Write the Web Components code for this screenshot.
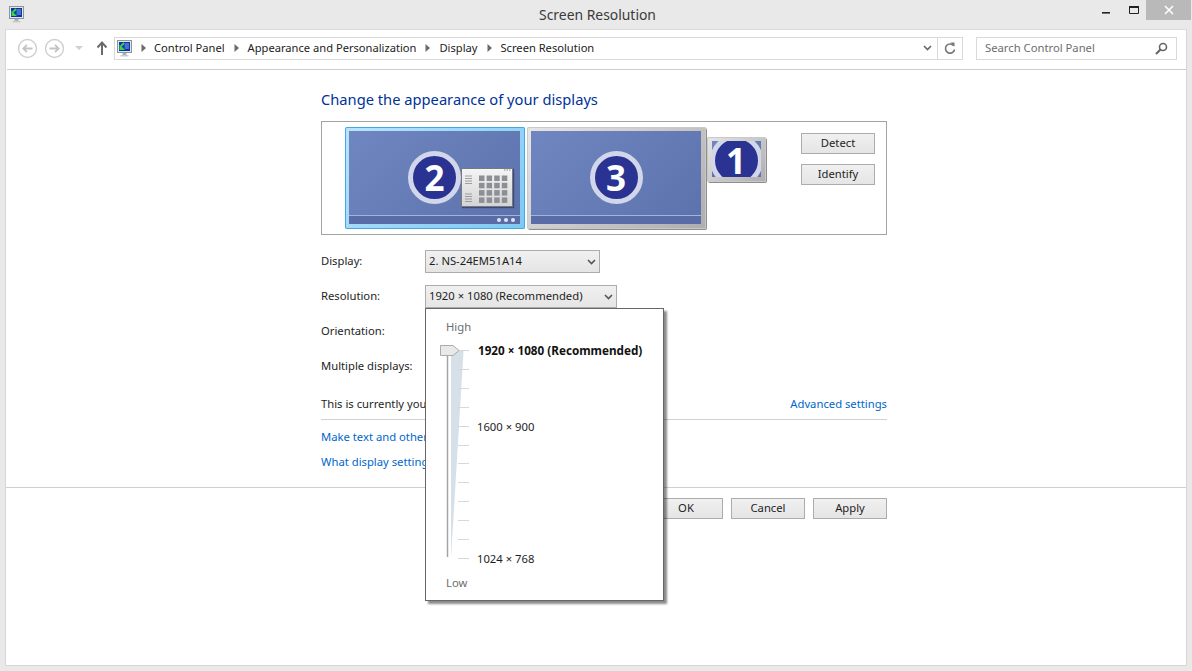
<!DOCTYPE html>
<html lang="en">
<head>
<meta charset="utf-8">
<title>Screen Resolution</title>
<style>
  html, body { margin: 0; height: 100%; overflow: hidden; background: #e9e9e9; }
  body { font: 11.25px/18px "Noto Sans", "Liberation Sans", sans-serif; color: #1e1e1e; }
</style>
</head>
<body>
<win-frame heading="Screen Resolution">
  <nav-toolbar slot="toolbar"></nav-toolbar>

  <display-page>
    <page-heading>Change the appearance of your displays</page-heading>
    <display-preview>
      <display-tile number="2" selected taskbar></display-tile>
      <display-tile number="3" taskbar></display-tile>
      <display-tile number="1" small></display-tile>
      <win-button slot="actions">Detect</win-button>
      <win-button slot="actions">Identify</win-button>
    </display-preview>
    <form-row label="Display:"><win-select value="2. NS-24EM51A14" width="175"></win-select></form-row>
    <form-row label="Resolution:"><win-select value="1920 × 1080 (Recommended)" width="192"></win-select></form-row>
    <!-- these two selects and the ends of the lines below sit behind the open popup -->
    <form-row label="Orientation:"><win-select width="175"></win-select></form-row>
    <form-row label="Multiple displays:"><win-select width="175"></win-select></form-row>
    <status-row>
      This is currently you
      <ui-link slot="end">Advanced settings</ui-link>
    </status-row>
    <ui-link block>Make text and other</ui-link>
    <ui-link block second>What display setting</ui-link>
  </display-page>

  <dialog-footer slot="footer">
    <win-button>OK</win-button>
    <win-button>Cancel</win-button>
    <win-button>Apply</win-button>
  </dialog-footer>

  <res-popup slot="overlay"></res-popup>
</win-frame>

<script>
// same little monitor glyph in the title bar and the address box
const MONITOR_ICON = `
  <svg width="17" height="17" viewBox="0 0 17 17" style="display:block">
    <rect x="1.500" y="0.500" width="14" height="12" fill="#e4e7ea" stroke="#8c949c"/>
    <rect x="3" y="2" width="11" height="9" fill="#0a35a8"/>
    <path d="M8.500 4h4.500M8.500 6h4.500M8.500 8h4.500" stroke="#7fb0ea" stroke-width="1"/>
    <path d="M8 3 5 6" stroke="#3fd34a" stroke-width="1.800"/>
    <path d="M3.500 4.500v5.500H9z" fill="#3fd34a"/>
    <path d="M6.500 13h4v2h-4z" fill="#aab0b6"/>
    <path d="M4.500 15h8v1.500h-8z" fill="#c8ccd0"/>
  </svg>`;

class WinFrame extends HTMLElement {
  constructor() {
    super();
    this.attachShadow({ mode: 'open' });
    this.shadowRoot.innerHTML = `
      <style>
        :host { display: flex; flex-direction: column; height: 671px; position: relative; }
        .titlebar { height: 29px; flex: none; display: flex; position: relative; }
        .app-icon { padding: 6px 0 0 8px; }
        .title {
          position: absolute; left: 0; right: 0; top: 5px; text-align: center;
          font-size: 13.900px; line-height: 20px; color: #3a3a3a; padding-left: 3px;
        }
        .controls { margin-left: auto; display: flex; margin-right: 1px; height: 20px; }
        .controls div { display: flex; align-items: center; justify-content: center; }
        .ctl-min { width: 30px; }
        .ctl-max { width: 25px; }
        .close { width: 45px; background: #b9b9b9; }
        .client {
          flex: 1; margin: 0 5px 5px; background: #fff; display: flex; flex-direction: column;
          border: 1px solid #d6d6d6; border-top-color: #dcdcdc; min-height: 0;
        }
      </style>
      <div class="titlebar">
        <div class="app-icon">${MONITOR_ICON}</div>
        <div class="title"></div>
        <div class="controls">
          <div class="ctl-min"><svg width="10" height="10"><path d="M1 7h8v1.600H1z" fill="#222"/></svg></div>
          <div class="ctl-max"><svg width="12" height="10"><path d="M1.500 1.500h9v7h-9z" fill="none" stroke="#222"/><path d="M1 1h10v2H1z" fill="#222"/></svg></div>
          <div class="close"><svg width="10" height="10"><path d="M1 1l8 8M9 1l-8 8" stroke="#fff" stroke-width="1.600"/></svg></div>
        </div>
      </div>
      <div class="client">
        <slot name="toolbar"></slot>
        <slot></slot>
        <slot name="footer"></slot>
      </div>
      <slot name="overlay"></slot>`;
  }
  connectedCallback() {
    this.shadowRoot.querySelector('.title').textContent = this.getAttribute('heading') || '';
  }
}

class NavToolbar extends HTMLElement {
  constructor() {
    super();
    this.attachShadow({ mode: 'open' });
    const crumbs = ['Control Panel', 'Appearance and Personalization', 'Display', 'Screen Resolution'];
    const arrow = '<svg width="5" height="8"><path d="M0.500 0v8L5 4z" fill="#6b6b6b"/></svg>';
    this.shadowRoot.innerHTML = `
      <style>
        :host {
          display: flex; align-items: center; height: 40px; flex: none; box-sizing: border-box;
          border-bottom: 1px solid #cdcdcd; margin-left: 1px; padding: 0 9px 3px 10px;
        }
        svg { display: block; flex: none; }
        .nav { width: 21px; margin-right: 6px; }
        .drop { margin: 0 13px 0 4px; }
        .up { margin-right: 6px; }
        .address, .search {
          height: 23px; box-sizing: border-box; border: 1px solid #d9d9d9;
          display: flex; align-items: center; background: #fff;
        }
        .address { flex: 1; padding-left: 1px; min-width: 0; }
        .sep { display: flex; justify-content: center; width: 23px; flex: none; }
        .sep.first { width: 21px; }
        .crumb { white-space: nowrap; color: #222; font-size: 11.150px; padding-bottom: 1px; }
        .chev { margin-left: auto; margin-right: 5px; }
        .refresh {
          width: 24px; height: 21px; border-left: 1px solid #d9d9d9; display: flex;
          align-items: center; justify-content: center; flex: none;
        }
        .search { width: 201px; margin-left: 13px; padding: 0 8px; color: #6d6d6d; justify-content: space-between; flex: none; }
      </style>
      <svg class="nav" width="21" height="21" viewBox="0 0 21 21">
        <circle cx="10.500" cy="10.500" r="9" fill="#fff" stroke="#cfcfcf" stroke-width="1.400"/>
        <path d="M15.500 10.500H6.500M10 6.800 6.300 10.500 10 14.200" fill="none" stroke="#c4c4c4" stroke-width="1.800"/>
      </svg>
      <svg class="nav" width="21" height="21" viewBox="0 0 21 21">
        <circle cx="10.500" cy="10.500" r="9" fill="#fff" stroke="#cfcfcf" stroke-width="1.400"/>
        <path d="M5.500 10.500H14.500M11 6.800 14.700 10.500 11 14.200" fill="none" stroke="#c4c4c4" stroke-width="1.800"/>
      </svg>
      <svg class="drop" width="8" height="4"><path d="M0 0h8L4 4z" fill="#d0d0d0"/></svg>
      <svg class="up" width="12" height="14" viewBox="0 0 12 14"><path d="M6 14V2M1.500 6.500 6 1.500l4.500 5" fill="none" stroke="#6a6a6a" stroke-width="2"/></svg>
      <div class="address">
        ${MONITOR_ICON}
        ${crumbs.map((c, i) => `<span class="sep ${i ? '' : 'first'}">${arrow}</span><span class="crumb">${c}</span>`).join('')}
        <svg class="chev" width="9" height="6"><path d="M1 1l3.500 3.500L8 1" fill="none" stroke="#666" stroke-width="1.600"/></svg>
        <div class="refresh">
          <svg width="12" height="13" viewBox="0 0 12 13"><path d="M9.800 3.800A4.600 4.600 0 1 0 10.600 7.500" fill="none" stroke="#777" stroke-width="1.600"/><path d="M6.500 0.500 10.500 0.500 10.500 4.500z" fill="#777"/></svg>
        </div>
      </div>
      <div class="search">
        <span>Search Control Panel</span>
        <svg width="13" height="13" viewBox="0 0 13 13"><circle cx="8" cy="5" r="3.500" fill="none" stroke="#666" stroke-width="1.600"/><path d="M5.500 7.500 1 12" stroke="#666" stroke-width="2.200"/></svg>
      </div>`;
  }
}

class DisplayPage extends HTMLElement {
  constructor() {
    super();
    this.attachShadow({ mode: 'open' });
    this.shadowRoot.innerHTML = `
      <style>:host { display: block; flex: 1; padding: 20px 0 0 315px; width: 566px; }</style>
      <slot></slot>`;
  }
}

class PageHeading extends HTMLElement {
  constructor() {
    super();
    this.attachShadow({ mode: 'open' });
    this.shadowRoot.innerHTML = `
      <style>
        :host {
          display: block; font-size: 14.700px; line-height: 20px; color: #003399;
          margin: -1px 0 12px; white-space: nowrap;
        }
      </style>
      <slot></slot>`;
  }
}

class DisplayPreview extends HTMLElement {
  constructor() {
    super();
    this.attachShadow({ mode: 'open' });
    this.shadowRoot.innerHTML = `
      <style>
        :host {
          display: flex; box-sizing: border-box; height: 114px; width: 566px;
          border: 1px solid #a3a3a3; padding: 5px 0 0 23px; margin-bottom: 15px;
        }
        .tiles { display: flex; align-items: flex-start; gap: 2px; }
        .actions { display: flex; flex-direction: column; gap: 10px; margin: 6px 0 0 35px; }
      </style>
      <div class="tiles"><slot></slot></div>
      <div class="actions"><slot name="actions"></slot></div>`;
  }
}

class DisplayTile extends HTMLElement {
  constructor() {
    super();
    this.attachShadow({ mode: 'open' });
    this.shadowRoot.innerHTML = `
      <style>
        :host {
          display: block; box-sizing: border-box; position: relative; flex: none;
          width: 180px; height: 102px; padding: 4px 5px 5px 4px;
          background: linear-gradient(135deg, #e6e6e6, #c4c4c4 60%, #adadad);
          border-radius: 2px; box-shadow: inset 0 0 0 1px #c9c9c9, 1px 1px 0 #8e8e8e;
        }
        :host([number="3"]) { width: 179px; }
        :host([selected]) {
          background: linear-gradient(135deg, #b9e5fb, #7cc9f3);
          box-shadow: inset 0 0 0 1px #4aa6e2;
        }
        :host([small]) {
          width: 59px; height: 45px; margin: 10px 0 0 -1px; padding: 4px 5px 5px;
        }
        .screen {
          position: relative; height: 100%; overflow: hidden; display: flex;
          align-items: center; justify-content: center;
          background: linear-gradient(135deg, #6f86c1, #5c72ad);
        }
        .taskbar {
          position: absolute; left: 0; right: 0; bottom: 0; height: 8px;
          background: #5a6ca6; border-top: 1px solid #a5b2dc;
        }
        :host([small]) .taskbar { height: 9px; border-top-color: #7d8cc0; background: #6075b0; }
        .badge {
          position: relative; box-sizing: border-box; flex: none; width: 53px; height: 53px; border-radius: 50%;
          background: #2a3391; border: 5px solid #d2d6ea;
        }
        :host([small]) .badge { top: 1px; }
        /* the number stays outside the clipped screen so the small tile doesn't cut it */
        .num {
          position: absolute; left: 0; right: 1px; top: 0; bottom: 1px; display: flex;
          align-items: center; justify-content: center; color: #fff;
          font: 700 35px/1 "Open Sans", "Noto Sans", sans-serif;
        }
        :host([small]) .num { top: 2px; }
        .dots { position: absolute; right: 5px; bottom: 2px; display: flex; gap: 3px; }
        .dots i { width: 4px; height: 4px; border-radius: 50%; background: #dfe4f2; }
        .start {
          position: absolute; left: 112px; top: 37px; width: 52px; height: 39px; box-sizing: border-box;
          background: linear-gradient(#f4f4f4, #d4d4d4); border: 1px solid #77797f;
          box-shadow: 1px 1px 1px rgba(20,30,70,.5);
        }
      </style>
      <div class="screen"><span class="badge"></span></div>
      <span class="num"></span>`;
  }

  connectedCallback() {
    const screen = this.shadowRoot.querySelector('.screen');
    this.shadowRoot.querySelector('.num').textContent = this.getAttribute('number');
    const bar = document.createElement('div');
    bar.className = 'taskbar';
    screen.insertBefore(bar, screen.firstChild);
    if (this.hasAttribute('selected')) {
      bar.innerHTML = '<div class="dots"><i></i><i></i><i></i></div>';
      const start = document.createElement('div');
      start.className = 'start';
      start.innerHTML = `<svg width="50" height="37" viewBox="0 0 50 37" style="display:block">
        <path d="M3 7h7M3 9.500h7M3 12h7M3 14.500h7M3 25h7M3 27.500h7M3 30h7M3 32.500h7" stroke="#8c8c8c" stroke-width="0.800"/>
        ${[0, 1, 2, 3].map(r => [0, 1, 2, 3].map(c =>
          `<rect x="${17 + c * 7.600}" y="${6.500 + r * 7.300}" width="5.500" height="5.500" fill="#8c8f96"/>`).join('')).join('')}
        <path d="M42 1h1.500M44.500 1H46M47 1h1.500" stroke="#8c8c8c"/>
      </svg>`;
      screen.appendChild(start);
    }
  }
}

class WinButton extends HTMLElement {
  constructor() {
    super();
    this.attachShadow({ mode: 'open' });
    this.shadowRoot.innerHTML = `
      <style>
        :host {
          display: flex; align-items: center; justify-content: center; box-sizing: border-box;
          width: 74px; height: 21px; border: 1px solid #acacac; color: #1e1e1e; padding-bottom: 1px;
          background: linear-gradient(#f0f0f0, #e5e5e5);
        }
      </style>
      <slot></slot>`;
  }
}

class WinSelect extends HTMLElement {
  constructor() {
    super();
    this.attachShadow({ mode: 'open' });
    this.shadowRoot.innerHTML = `
      <style>
        :host {
          display: flex; align-items: center; justify-content: space-between; box-sizing: border-box;
          height: 23px; padding: 0 3px 0 3px; border: 1px solid #acacac; white-space: nowrap;
          background: linear-gradient(#f0f0f0, #e5e5e5); color: #1e1e1e;
        }
        svg { display: block; flex: none; }
        .value { padding-bottom: 1px; }
      </style>
      <span class="value"></span>
      <svg width="9" height="6"><path d="M1 1l3.500 3.500L8 1" fill="none" stroke="#555" stroke-width="1.600"/></svg>`;
  }
  connectedCallback() {
    this.shadowRoot.querySelector('.value').textContent = this.getAttribute('value') || '';
    this.style.width = this.getAttribute('width') + 'px';
  }
}

class FormRow extends HTMLElement {
  constructor() {
    super();
    this.attachShadow({ mode: 'open' });
    this.shadowRoot.innerHTML = `
      <style>
        :host { display: flex; align-items: center; height: 23px; margin-bottom: 12px; }
        label { width: 104px; flex: none; white-space: nowrap; padding-bottom: 1px; }
      </style>
      <label></label><slot></slot>`;
  }
  connectedCallback() {
    this.shadowRoot.querySelector('label').textContent = this.getAttribute('label');
  }
}

class StatusRow extends HTMLElement {
  constructor() {
    super();
    this.attachShadow({ mode: 'open' });
    this.shadowRoot.innerHTML = `
      <style>
        :host {
          display: flex; justify-content: space-between; width: 566px; height: 18px;
          margin-top: 17px; padding-bottom: 6px; border-bottom: 1px solid #d0d0d0; white-space: nowrap;
        }
      </style>
      <span><slot></slot></span><slot name="end"></slot>`;
  }
}

class UiLink extends HTMLElement {
  constructor() {
    super();
    this.attachShadow({ mode: 'open' });
    this.shadowRoot.innerHTML = `
      <style>
        :host { color: #0066cc; white-space: nowrap; }
        :host([block]) { display: block; margin-top: 8px; }
        :host([second]) { margin-top: 7px; }
      </style>
      <slot></slot>`;
  }
}

class DialogFooter extends HTMLElement {
  constructor() {
    super();
    this.attachShadow({ mode: 'open' });
    this.shadowRoot.innerHTML = `
      <style>
        :host {
          display: flex; justify-content: flex-end; gap: 8px; flex: none; height: 178px; box-sizing: border-box;
          border-top: 1px solid #cfcfcf; padding: 10px 299px 0 0;
        }
      </style>
      <slot></slot>`;
  }
}

class ResPopup extends HTMLElement {
  constructor() {
    super();
    this.attachShadow({ mode: 'open' });
    // ticks come out just under 19px apart, labels land on rows 1, 5 and 12
    const ticks = Array.from({ length: 12 }, (_, i) => {
      const y = Math.round(9 + i * 18.9) + 0.5;
      return `<path d="M22 ${y}H33" stroke="#d8d8d8"/>`;
    }).join('');
    this.shadowRoot.innerHTML = `
      <style>
        :host {
          position: absolute; left: 425px; top: 308px; width: 239px; height: 293px; box-sizing: border-box;
          background: #fff; border: 1px solid #666; box-shadow: 3px 3px 2px rgba(0,0,0,.45);
          padding-top: 9px;
        }
        .end { color: #6d6d6d; padding-left: 20px; height: 18px; }
        .scale { display: flex; margin: 5px 0; padding-left: 10px; }
        svg { display: block; flex: none; }
        .labels { display: grid; grid-template-rows: repeat(12, 19px); white-space: nowrap; }
        .labels span { line-height: 19px; }
        .cur { font-weight: 700; font-size: 11.700px; grid-row: 1; color: #111; margin-left: 1px; }
        .last { grid-row: 12; margin-top: -1px; }
      </style>
      <div class="end">High</div>
      <div class="scale">
        <svg width="41" height="228" viewBox="0 0 41 228">
          <path d="M15 10H27.500L15 217z" fill="#d6e0e8"/>
          ${ticks}
          <path d="M11.500 9V216" stroke="#a4a4a4" stroke-width="1.500"/>
          <path d="M4.500 4.500H17L23 9.500 17 14.500H4.500z" fill="#e9e9e9" stroke="#ababab"/>
        </svg>
        <div class="labels">
          <span class="cur">1920 × 1080 (Recommended)</span>
          <span style="grid-row:5">1600 × 900</span>
          <span class="last">1024 × 768</span>
        </div>
      </div>
      <div class="end">Low</div>`;
  }
}

customElements.define('win-frame', WinFrame);
customElements.define('nav-toolbar', NavToolbar);
customElements.define('display-page', DisplayPage);
customElements.define('page-heading', PageHeading);
customElements.define('display-preview', DisplayPreview);
customElements.define('display-tile', DisplayTile);
customElements.define('win-button', WinButton);
customElements.define('win-select', WinSelect);
customElements.define('form-row', FormRow);
customElements.define('status-row', StatusRow);
customElements.define('ui-link', UiLink);
customElements.define('dialog-footer', DialogFooter);
customElements.define('res-popup', ResPopup);
</script>
</body>
</html>
